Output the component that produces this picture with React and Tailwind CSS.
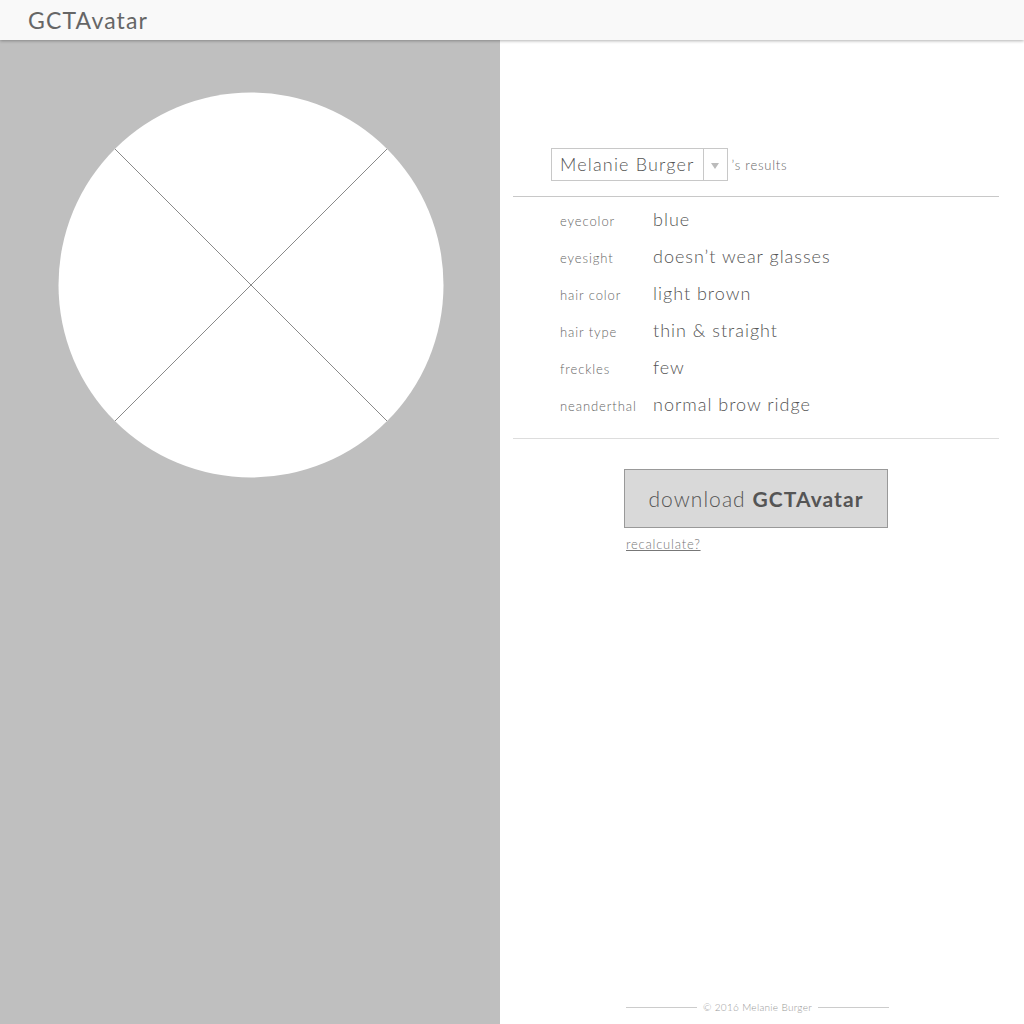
const RESULTS = [
  { label: 'eyecolor', value: 'blue' },
  { label: 'eyesight', value: 'doesn’t wear glasses' },
  { label: 'hair color', value: 'light brown' },
  { label: 'hair type', value: 'thin & straight' },
  { label: 'freckles', value: 'few' },
  { label: 'neanderthal', value: 'normal brow ridge' },
];

function AvatarPlaceholder() {
  return (
    <svg width="386" height="386" viewBox="0 0 386 386" className="block">
      <circle cx="193" cy="193" r="192.5" fill="#ffffff" />
      <line x1="57" y1="57" x2="329" y2="329" stroke="#8a8a8a" strokeWidth="1" />
      <line x1="329" y1="57" x2="57" y2="329" stroke="#8a8a8a" strokeWidth="1" />
    </svg>
  );
}

export default function App() {
  return (
    <div className="w-[1024px] h-[1024px] flex flex-col bg-white text-[#555] font-['Lato','Open_Sans',sans-serif] font-light overflow-hidden">
      {/* Header */}
      <header className="relative z-10 h-[40px] bg-[#f9f9f9] shadow-[0_1px_3px_rgba(0,0,0,0.3)] flex items-center pl-[28px]">
        <h1 className="text-[23px] leading-none text-[#666] tracking-[0.05em] font-normal">GCTAvatar</h1>
      </header>

      <div className="flex flex-1">
        {/* Avatar panel */}
        <div className="w-[500px] bg-[#bfbfbf] pt-[52px] pl-[58px]">
          <AvatarPlaceholder />
        </div>

        {/* Results panel */}
        <div className="flex-1 flex flex-col pl-[13px] pr-[25px]">
          <div className="flex items-center mt-[108px] pl-[38px]">
            <div className="flex h-[33px] border border-[#c8c8c8]">
              <span className="px-[8px] text-[18px] leading-[31px] text-[#555] tracking-[0.065em]">Melanie Burger</span>
              <span className="w-[24px] border-l border-[#c8c8c8] flex items-center justify-center">
                <span className="w-0 h-0 border-l-[4px] border-r-[4px] border-t-[6px] border-l-transparent border-r-transparent border-t-[#bbb] mt-[2px]" />
              </span>
            </div>
            <span className="ml-[4px] text-[13px] text-[#666] mt-[2px] tracking-[0.06em]">’s results</span>
          </div>

          <div className="mt-[15px] border-t border-[#c8c8c8]" />

          <div className="flex flex-col pl-[47px] pt-[4px] pb-[15px]">
            {RESULTS.map(({ label, value }) => (
              <div key={label} className="flex items-center h-[37px]">
                <span className="w-[93px] text-[13px] text-[#666] mt-[4px] tracking-[0.07em]">{label}</span>
                <span className="text-[18px] text-[#555] tracking-[0.055em]">{value}</span>
              </div>
            ))}
          </div>

          <div className="border-t border-[#ddd]" />

          <div className="flex flex-col pl-[111px] mt-[30px]">
            <button className="w-[264px] h-[59px] bg-[#d9d9d9] border border-[#999] text-[21px] text-[#555] tracking-[0.05em]">
              download <span className="font-bold">GCTAvatar</span>
            </button>
            <a href="#" className="mt-[7px] ml-[2px] text-[13px] text-[#777] underline tracking-[0.06em]">recalculate?</a>
          </div>

          <div className="mt-auto mb-[9px] flex items-center pl-[113px] w-[376px]">
            <span className="flex-1 border-t border-[#ccc]" />
            <span className="px-[6px] text-[10px] text-[#999] tracking-[0.03em]">© 2016 Melanie Burger</span>
            <span className="flex-1 border-t border-[#ccc]" />
          </div>
        </div>
      </div>
    </div>
  );
}
